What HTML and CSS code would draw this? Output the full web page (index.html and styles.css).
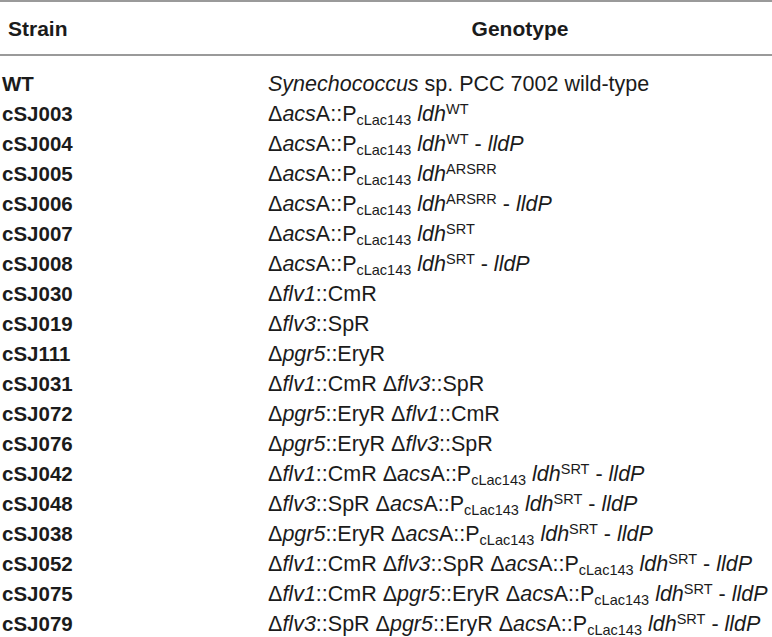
FILE: index.html
```html
<!DOCTYPE html>
<html>
<head>
<meta charset="utf-8">
<link rel="stylesheet" href="styles.css">
</head>
<body>
<table class="strains">
  <thead>
    <tr><th class="col-strain">Strain</th><th class="col-geno">Genotype</th></tr>
  </thead>
  <tbody>
    <tr class="first"><td class="s">WT</td><td class="g"><i>Synechococcus</i> sp. PCC 7002 wild-type</td></tr>
    <tr><td class="s">cSJ003</td><td class="g">Δ<i>acs</i>A::P<sub>cLac143</sub> <i>ldh</i><sup>WT</sup></td></tr>
    <tr><td class="s">cSJ004</td><td class="g">Δ<i>acs</i>A::P<sub>cLac143</sub> <i>ldh</i><sup>WT</sup> - <i>lldP</i></td></tr>
    <tr><td class="s">cSJ005</td><td class="g">Δ<i>acs</i>A::P<sub>cLac143</sub> <i>ldh</i><sup>ARSRR</sup></td></tr>
    <tr><td class="s">cSJ006</td><td class="g">Δ<i>acs</i>A::P<sub>cLac143</sub> <i>ldh</i><sup>ARSRR</sup> - <i>lldP</i></td></tr>
    <tr><td class="s">cSJ007</td><td class="g">Δ<i>acs</i>A::P<sub>cLac143</sub> <i>ldh</i><sup>SRT</sup></td></tr>
    <tr><td class="s">cSJ008</td><td class="g">Δ<i>acs</i>A::P<sub>cLac143</sub> <i>ldh</i><sup>SRT</sup> - <i>lldP</i></td></tr>
    <tr><td class="s">cSJ030</td><td class="g">Δ<i>flv1</i>::CmR</td></tr>
    <tr><td class="s">cSJ019</td><td class="g">Δ<i>flv3</i>::SpR</td></tr>
    <tr><td class="s">cSJ111</td><td class="g">Δ<i>pgr5</i>::EryR</td></tr>
    <tr><td class="s">cSJ031</td><td class="g">Δ<i>flv1</i>::CmR Δ<i>flv3</i>::SpR</td></tr>
    <tr><td class="s">cSJ072</td><td class="g">Δ<i>pgr5</i>::EryR Δ<i>flv1</i>::CmR</td></tr>
    <tr><td class="s">cSJ076</td><td class="g">Δ<i>pgr5</i>::EryR Δ<i>flv3</i>::SpR</td></tr>
    <tr><td class="s">cSJ042</td><td class="g">Δ<i>flv1</i>::CmR Δ<i>acs</i>A::P<sub>cLac143</sub> <i>ldh</i><sup>SRT</sup> - <i>lldP</i></td></tr>
    <tr><td class="s">cSJ048</td><td class="g">Δ<i>flv3</i>::SpR Δ<i>acs</i>A::P<sub>cLac143</sub> <i>ldh</i><sup>SRT</sup> - <i>lldP</i></td></tr>
    <tr><td class="s">cSJ038</td><td class="g">Δ<i>pgr5</i>::EryR Δ<i>acs</i>A::P<sub>cLac143</sub> <i>ldh</i><sup>SRT</sup> - <i>lldP</i></td></tr>
    <tr><td class="s">cSJ052</td><td class="g">Δ<i>flv1</i>::CmR Δ<i>flv3</i>::SpR Δ<i>acs</i>A::P<sub>cLac143</sub> <i>ldh</i><sup>SRT</sup> - <i>lldP</i></td></tr>
    <tr><td class="s">cSJ075</td><td class="g">Δ<i>flv1</i>::CmR Δ<i>pgr5</i>::EryR Δ<i>acs</i>A::P<sub>cLac143</sub> <i>ldh</i><sup>SRT</sup> - <i>lldP</i></td></tr>
    <tr><td class="s">cSJ079</td><td class="g">Δ<i>flv3</i>::SpR Δ<i>pgr5</i>::EryR Δ<i>acs</i>A::P<sub>cLac143</sub> <i>ldh</i><sup>SRT</sup> - <i>lldP</i></td></tr>
  </tbody>
</table>
</body>
</html>
```

FILE: styles.css
```css
html, body {
  margin: 0;
  padding: 0;
  background: #ffffff;
}

body {
  font-family: "Liberation Sans", Arial, Helvetica, sans-serif;
  color: #1b1b1b;
  font-size: 20px;
}

.strains {
  width: 772px;
  border-collapse: collapse;
  border-spacing: 0;
  table-layout: fixed;
}

.strains thead tr {
  border-top: 2px solid #9a9a9a;
  border-bottom: 2px solid #9a9a9a;
}

.strains th {
  font-weight: bold;
  font-size: 21px;
  height: 51px;
  padding: 0;
  line-height: 24px;
  vertical-align: middle;
  padding-top: 1px;
}

.col-strain {
  width: 268px;
  text-align: left;
  padding-left: 8px !important;
  box-sizing: border-box;
}

.col-geno {
  text-align: center;
}

.strains td {
  padding: 0;
  height: 30px;
  line-height: 30px;
  white-space: nowrap;
  vertical-align: top;
}

.strains tr.first td {
  padding-top: 13px;
}

.s {
  font-weight: bold;
  font-size: 20.5px;
  padding-left: 2px !important;
}

.g {
  font-weight: normal;
  font-size: 21.5px;
}

sub, sup {
  font-size: 14.5px;
  line-height: 0;
}

sub {
  vertical-align: -4px;
}

sup {
  vertical-align: 7px;
}
```
